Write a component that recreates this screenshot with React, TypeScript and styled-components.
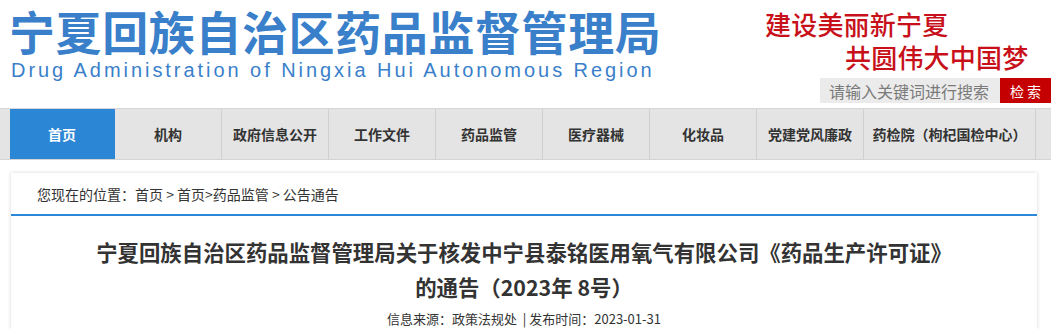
import styled, { createGlobalStyle } from 'styled-components'

const GlobalStyle = createGlobalStyle`
  body {
    margin: 0;
    background: #fff;
    font-family: "Noto Sans CJK SC", "Liberation Sans", sans-serif;
    color: #333;
  }
`

const Page = styled.div`
  width: 1051px;
  overflow: hidden;
`

const Header = styled.header`
  height: 109px;
  display: flex;
  justify-content: space-between;
  border-bottom: 1px solid #d6d6d6;
  box-sizing: border-box;
`

const Brand = styled.div`
  padding: 1px 0 0 9px;
  display: flex;
  flex-direction: column;
`

const BrandTitle = styled.h1`
  margin: 0;
  font-size: 46px;
  line-height: 58px;
  letter-spacing: 0.6px;
  font-weight: 700;
  color: #3a7fca;
  white-space: nowrap;
`

const BrandSub = styled.div`
  font-family: "Liberation Sans", Arial, sans-serif;
  font-size: 20px;
  line-height: 21px;
  letter-spacing: 2.95px;
  color: #3a7fca;
  margin: 1px 0 0 2px;
  white-space: nowrap;
`

const Side = styled.div`
  width: 286px;
  display: flex;
  flex-direction: column;
  padding-top: 7px;
`

const Slogan = styled.div<{ $indent: number }>`
  font-size: 26px;
  line-height: 33px;
  font-weight: 500;
  color: #c8101a;
  padding-left: ${(p) => p.$indent}px;
  letter-spacing: 0.2px;
`

const SearchRow = styled.form`
  display: flex;
  justify-content: flex-end;
  margin-top: 5px;
`

const SearchInput = styled.input`
  width: 180px;
  height: 25px;
  border: none;
  background: #ebebeb;
  padding: 0 0 0 9px;
  box-sizing: border-box;
  font-family: inherit;
  font-size: 16px;
  color: #777;
  outline: none;

  &::placeholder {
    color: #7a7a7a;
  }
`

const SearchButton = styled.button`
  width: 51px;
  height: 25px;
  border: none;
  background: #c40000;
  color: #fff;
  font-family: inherit;
  font-size: 14px;
  letter-spacing: 3px;
  padding: 0 0 0 3px;
`

const Nav = styled.nav`
  height: 51px;
  display: flex;
  padding-left: 10px;
  background: #e4e4e4;
  border-bottom: 1px solid #d4d4d4;
  box-sizing: border-box;
`

const NavItem = styled.a<{ $active?: boolean; $w: number }>`
  width: ${(p) => p.$w}px;
  display: flex;
  align-items: center;
  justify-content: center;
  font-size: 14px;
  font-weight: 700;
  color: ${(p) => (p.$active ? '#fff' : '#333')};
  background: ${(p) => (p.$active ? '#2b86d6' : 'transparent')};
  border-right: 1px solid ${(p) => (p.$active ? '#2b86d6' : '#d0d0d0')};
  box-sizing: border-box;
  text-decoration: none;
  cursor: pointer;
`

const Card = styled.section`
  margin: 13px 14px 0 11px;
  background: #fff;
  box-shadow: 0 0 4px rgba(0, 0, 0, 0.16);
`

const Crumbs = styled.div`
  height: 41px;
  display: flex;
  align-items: center;
  padding-left: 26px;
  font-size: 14px;
  color: #333;
  border-bottom: 2px solid #2b87d8;
`

const Article = styled.article`
  padding: 18px 40px 0;
  text-align: center;
`

const Title = styled.h2`
  margin: 0;
  font-size: 21.4px;
  line-height: 35px;
  font-weight: 700;
  color: #333;
`

const Meta = styled.div`
  margin-top: 5px;
  font-size: 13px;
  line-height: 20px;
  color: #333;
`

const navs = [
  { label: '首页', w: 105, active: true },
  { label: '机构', w: 107 },
  { label: '政府信息公开', w: 107 },
  { label: '工作文件', w: 107 },
  { label: '药品监管', w: 107 },
  { label: '医疗器械', w: 107 },
  { label: '化妆品', w: 107 },
  { label: '党建党风廉政', w: 107 },
  { label: '药检院（枸杞国检中心）', w: 172 },
]

export default function App() {
  return (
    <Page>
      <GlobalStyle />
      <Header>
        <Brand>
          <BrandTitle>宁夏回族自治区药品监督管理局</BrandTitle>
          <BrandSub>Drug Administration of Ningxia Hui Autonomous Region</BrandSub>
        </Brand>
        <Side>
          <Slogan $indent={0}>建设美丽新宁夏</Slogan>
          <Slogan $indent={80}>共圆伟大中国梦</Slogan>
          <SearchRow onSubmit={(e) => e.preventDefault()}>
            <SearchInput placeholder="请输入关键词进行搜索" />
            <SearchButton type="submit">检索</SearchButton>
          </SearchRow>
        </Side>
      </Header>
      <Nav>
        {navs.map((n) => (
          <NavItem key={n.label} $w={n.w} $active={n.active}>
            {n.label}
          </NavItem>
        ))}
      </Nav>
      <Card>
        <Crumbs>您现在的位置：首页 &gt; 首页&gt;药品监管 &gt; 公告通告</Crumbs>
        <Article>
          <Title>
            宁夏回族自治区药品监督管理局关于核发中宁县泰铭医用氧气有限公司《药品生产许可证》
            <br />
            的通告（2023年 8号）
          </Title>
          <Meta>信息来源：政策法规处 &nbsp;| 发布时间：2023-01-31</Meta>
        </Article>
      </Card>
    </Page>
  )
}
